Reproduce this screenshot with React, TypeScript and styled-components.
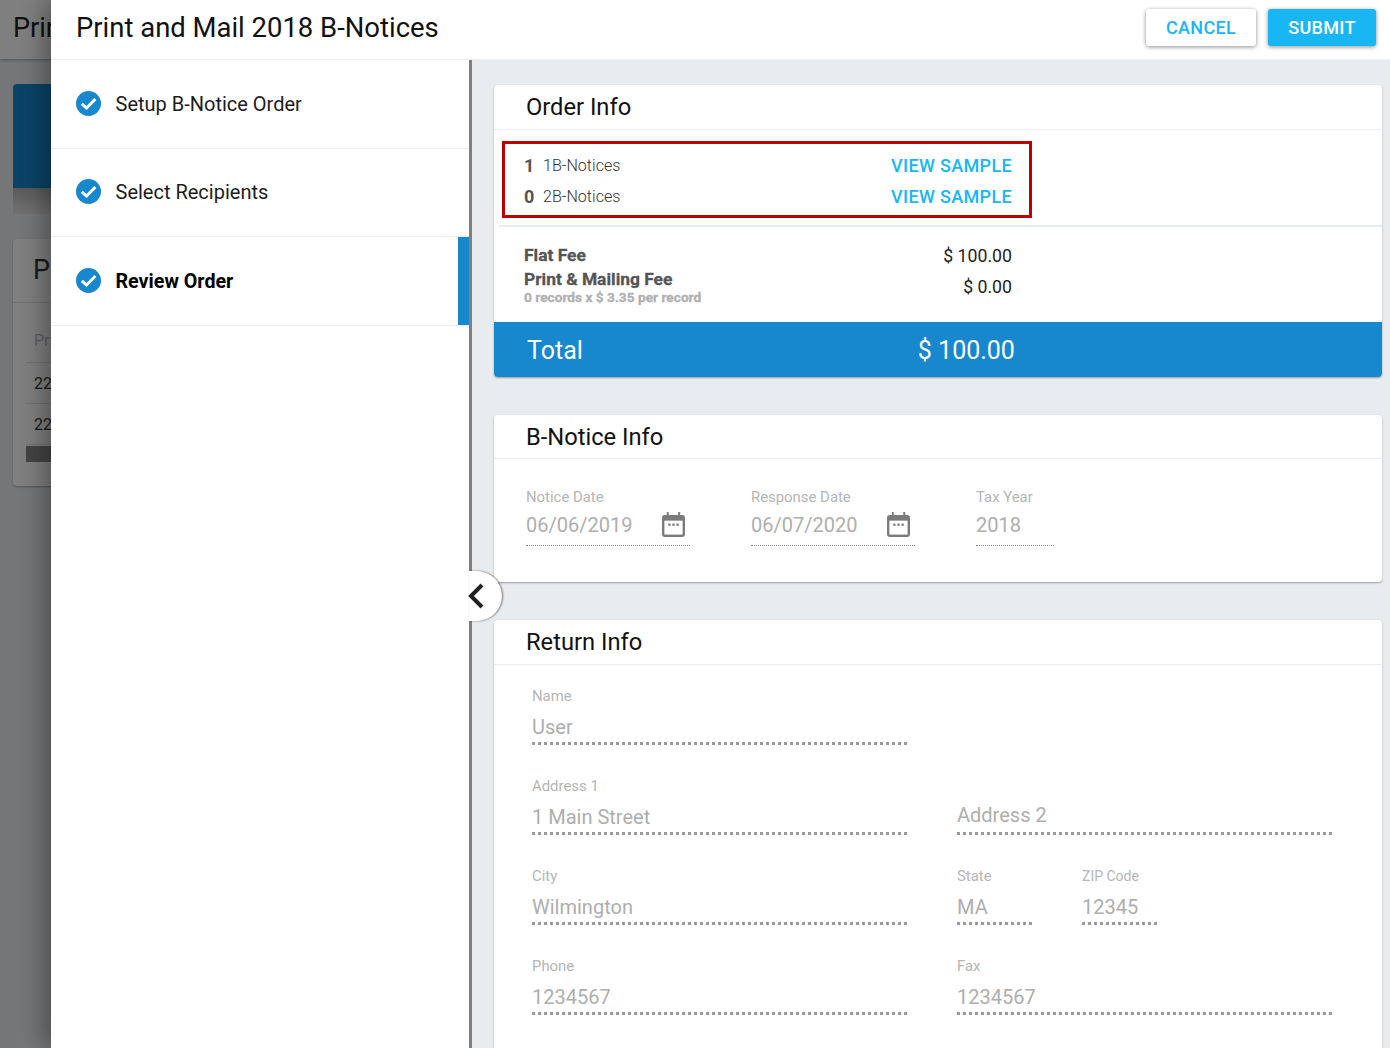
import * as React from 'react';
import styled, { createGlobalStyle } from 'styled-components';

const App = () => (
  <>
    <GlobalStyle />
    <Screen>
      <BackPage>
        <BackHeader>Print</BackHeader>
        <BackBody>
          <BackBanner />
          <BackBannerFoot />
          <BackCard>
            <BackCardTitle>Print</BackCardTitle>
            <BackRow $muted>Print</BackRow>
            <BackRow>22</BackRow>
            <BackRow>22</BackRow>
            <BackBar />
          </BackCard>
        </BackBody>
      </BackPage>
      <Scrim />
      <Drawer>
        <DrawerHeader>
          <DrawerTitle>Print and Mail 2018 B-Notices</DrawerTitle>
          <HeaderActions>
            <CancelButton>CANCEL</CancelButton>
            <SubmitButton>SUBMIT</SubmitButton>
          </HeaderActions>
        </DrawerHeader>
        <DrawerBody>
          <Sidebar>
            <Step $height={89}>
              <CheckIcon />
              <StepLabel>Setup B-Notice Order</StepLabel>
            </Step>
            <Step $height={88} $lift>
              <CheckIcon />
              <StepLabel>Select Recipients</StepLabel>
            </Step>
            <Step $height={89} $active>
              <CheckIcon />
              <StepLabel $active>Review Order</StepLabel>
            </Step>
            <CollapseButton aria-label="Collapse">
              <ChevronSvg width="20" height="28" viewBox="0 0 20 28">
                <path d="M16 3 L5 14 L16 25" fill="none" stroke="#212121" strokeWidth="4" />
              </ChevronSvg>
            </CollapseButton>
          </Sidebar>
          <Content>
            <OrderCard>
              <CardTitle>Order Info</CardTitle>
              <SampleBox>
                <SampleRow>
                  <Count>1</Count>
                  <SampleName>1B-Notices</SampleName>
                  <SampleLink>VIEW SAMPLE</SampleLink>
                </SampleRow>
                <SampleRow>
                  <Count>0</Count>
                  <SampleName>2B-Notices</SampleName>
                  <SampleLink>VIEW SAMPLE</SampleLink>
                </SampleRow>
              </SampleBox>
              <FeeDivider />
              <Fees>
                <FeeLabels>
                  <FeeLabel>Flat Fee</FeeLabel>
                  <FeeLabel>Print &amp; Mailing Fee</FeeLabel>
                  <FeeNote>0 records x $ 3.35 per record</FeeNote>
                </FeeLabels>
                <FeeValues>
                  <FeeValue>$ 100.00</FeeValue>
                  <FeeValue>$ 0.00</FeeValue>
                </FeeValues>
              </Fees>
              <TotalBar>
                <span>Total</span>
                <TotalAmount>$ 100.00</TotalAmount>
              </TotalBar>
            </OrderCard>

            <NoticeCard>
              <NoticeTitle>B-Notice Info</NoticeTitle>
              <NoticeFields>
                <ThinField $width={164}>
                  <FieldLabel>Notice Date</FieldLabel>
                  <ThinValue>
                    06/06/2019
                    <CalendarIcon />
                  </ThinValue>
                </ThinField>
                <ThinField $width={164}>
                  <FieldLabel>Response Date</FieldLabel>
                  <ThinValue>
                    06/07/2020
                    <CalendarIcon />
                  </ThinValue>
                </ThinField>
                <ThinField $width={78}>
                  <FieldLabel>Tax Year</FieldLabel>
                  <ThinValue>2018</ThinValue>
                </ThinField>
              </NoticeFields>
            </NoticeCard>

            <ReturnCard>
              <CardTitle>Return Info</CardTitle>
              <ReturnGrid>
                <WideField>
                  <FieldLabel>Name</FieldLabel>
                  <DottedValue>User</DottedValue>
                </WideField>
                <WideField />
                <WideField>
                  <FieldLabel>Address 1</FieldLabel>
                  <DottedValue>1 Main Street</DottedValue>
                </WideField>
                <WideField>
                  <DottedValue $placeholder>Address 2</DottedValue>
                </WideField>
                <WideField>
                  <FieldLabel>City</FieldLabel>
                  <DottedValue>Wilmington</DottedValue>
                </WideField>
                <SplitField>
                  <WideField>
                    <FieldLabel>State</FieldLabel>
                    <DottedValue>MA</DottedValue>
                  </WideField>
                  <WideField>
                    <FieldLabel $small>ZIP Code</FieldLabel>
                    <DottedValue>12345</DottedValue>
                  </WideField>
                </SplitField>
                <WideField>
                  <FieldLabel>Phone</FieldLabel>
                  <DottedValue>1234567</DottedValue>
                </WideField>
                <WideField>
                  <FieldLabel>Fax</FieldLabel>
                  <DottedValue>1234567</DottedValue>
                </WideField>
              </ReturnGrid>
            </ReturnCard>
          </Content>
        </DrawerBody>
      </Drawer>
    </Screen>
  </>
);

const CheckIcon = () => (
  <svg width="26" height="26" viewBox="0 0 26 26" style={{ flex: 'none' }}>
    <circle cx="12.5" cy="12.5" r="12.5" fill="#1787ce" />
    <path d="M5.8 12.8 L10.5 17 L19.4 8" fill="none" stroke="#fff" strokeWidth="3" />
  </svg>
);

const CalendarIcon = () => (
  <CalendarSvg width="23" height="25" viewBox="0 0 24 26">
    <path d="M5 0h2v3h10V0h2v3h2a3 3 0 0 1 3 3v17a3 3 0 0 1-3 3H3a3 3 0 0 1-3-3V6a3 3 0 0 1 3-3h2z" fill="#7b7b7b" />
    <rect x="2.5" y="9" width="19" height="14.5" fill="#fff" />
    <rect x="6.5" y="12" width="2.4" height="2.4" fill="#7b7b7b" />
    <rect x="10.8" y="12" width="2.4" height="2.4" fill="#7b7b7b" />
    <rect x="15.1" y="12" width="2.4" height="2.4" fill="#7b7b7b" />
  </CalendarSvg>
);

// STYLED COMPONENTS

const GlobalStyle = createGlobalStyle`
  html, body {
    margin: 0;
    padding: 0;
    height: 100%;
    overflow: hidden;
    background: #e9ecef;
    font-family: Roboto, "Liberation Sans", sans-serif;
  }
  * {
    box-sizing: border-box;
  }
`;

const Screen = styled.div`
  position: relative;
  width: 100%;
  height: 1048px;
  overflow: hidden;
`;

const BackPage = styled.div`
  height: 100%;
  background: #e9ecef;
`;

const BackHeader = styled.div`
  height: 59px;
  padding: 12px 13px 0;
  background: #fff;
  color: #212121;
  font-size: 27px;
  white-space: nowrap;
  overflow: hidden;
  box-shadow: 0 1px 3px rgba(0, 0, 0, 0.3);
`;

const BackBody = styled.div`
  padding: 25px 13px 0;
`;

const BackBanner = styled.div`
  height: 104px;
  background: #1787ce;
  border-radius: 4px 4px 0 0;
`;

const BackBannerFoot = styled.div`
  height: 26px;
  background: linear-gradient(#b4b4b4, #e4e4e4);
`;

const BackCard = styled.div`
  margin-top: 25px;
  height: 247px;
  background: #fff;
  border-radius: 4px;
  box-shadow: 0 1px 2px rgba(0, 0, 0, 0.3);
`;

const BackCardTitle = styled.div`
  height: 64px;
  padding: 15px 20px 0;
  font-size: 27px;
  color: #333;
  border-bottom: 1px solid #e4e4e4;
`;

const BackRow = styled.div<{ $muted?: boolean }>`
  height: ${p => (p.$muted ? 60 : 41)}px;
  margin-left: 13px;
  padding: ${p => (p.$muted ? 28 : 11)}px 8px 0;
  font-size: 16px;
  line-height: 20px;
  color: ${p => (p.$muted ? '#bbb' : '#333')};
  border-bottom: 1px solid #e4e4e4;
`;

const BackBar = styled.div`
  height: 16px;
  margin: 1px 0 0 13px;
  background: #888;
`;

const Scrim = styled.div`
  position: absolute;
  inset: 0;
  background: rgba(0, 0, 0, 0.5);
`;

const Drawer = styled.div`
  position: absolute;
  top: 0;
  right: 0;
  bottom: 0;
  left: 51px;
  display: flex;
  flex-direction: column;
  background: #fff;
  box-shadow: -8px 0 22px rgba(0, 0, 0, 0.32);
`;

const DrawerHeader = styled.header`
  flex: none;
  height: 60px;
  display: flex;
  align-items: flex-start;
  justify-content: space-between;
  padding: 9px 14px 0 25px;
  border-bottom: 1px solid #eceff1;
`;

const DrawerTitle = styled.h1`
  margin: 0;
  font-size: 27.45px;
  line-height: 38px;
  font-weight: 400;
  color: #111;
`;

const HeaderActions = styled.div`
  display: flex;
  gap: 12px;
`;

const CancelButton = styled.button`
  width: 110px;
  height: 37px;
  border: none;
  border-radius: 3px;
  background: #fff;
  color: #18b7f4;
  font: 500 18px Roboto, sans-serif;
  letter-spacing: 0.3px;
  box-shadow: 0 1px 4px rgba(0, 0, 0, 0.45);
`;

const SubmitButton = styled(CancelButton)`
  width: 108px;
  background: #18b7f4;
  color: #fff;
`;

const DrawerBody = styled.div`
  flex: 1;
  min-height: 0;
  display: flex;
`;

const Sidebar = styled.nav`
  position: relative;
  flex: none;
  width: 421px;
  background: #fff;
  border-right: 3px solid #808080;
`;

const Step = styled.div<{ $height: number; $active?: boolean; $lift?: boolean }>`
  height: ${p => p.$height}px;
  display: flex;
  align-items: center;
  gap: 13.5px;
  padding: 0 0 ${p => (p.$lift ? 1 : 0)}px 25px;
  border-bottom: 1px solid #eceff1;
  box-shadow: ${p => (p.$active ? 'inset -11px 0 0 #1787ce' : 'none')};
`;

const StepLabel = styled.span<{ $active?: boolean }>`
  font-size: ${p => (p.$active ? 19.7 : 20)}px;
  font-weight: ${p => (p.$active ? 700 : 400)};
  color: ${p => (p.$active ? '#000' : '#1c1c1c')};
`;

const CollapseButton = styled.button`
  position: absolute;
  top: 511px;
  right: -33px;
  width: 33px;
  height: 50px;
  padding: 0;
  display: flex;
  align-items: center;
  justify-content: flex-start;
  background: #fff;
  border: none;
  border-radius: 0 25px 25px 0;
  box-shadow: 1px 0 2px rgba(0, 0, 0, 0.5);
`;

const ChevronSvg = styled.svg`
  flex: none;
  margin-left: -3px;
`;

const Content = styled.main`
  flex: 1;
  min-width: 0;
  overflow: hidden;
  padding: 25px 8px 0 22px;
  background: #e9ecef;
`;

const Card = styled.section`
  background: #fff;
  border-radius: 4px;
  box-shadow: 0 1px 2px rgba(0, 0, 0, 0.35);
  overflow: hidden;
`;

const OrderCard = styled(Card)`
  height: 292px;
`;

const NoticeCard = styled(Card)`
  margin-top: 38px;
  height: 167px;
`;

const ReturnCard = styled(Card)`
  margin-top: 38px;
  height: 520px;
`;

const CardTitle = styled.h2`
  margin: 0;
  height: 45px;
  padding: 0 32px;
  font-size: 23.7px;
  line-height: 44px;
  font-weight: 400;
  color: #111;
  border-bottom: 1px solid #eceff1;
`;

const NoticeTitle = styled(CardTitle)`
  height: 44px;
`;

const SampleBox = styled.div`
  width: 530px;
  height: 77px;
  margin: 11px 0 0 8px;
  padding: 6px 17px 0 19px;
  border: 3px solid #c00000;
`;

const SampleRow = styled.div`
  height: 31px;
  display: flex;
  align-items: center;
`;

const Count = styled.span`
  width: 19px;
  font-size: 18px;
  font-weight: 700;
  color: #555;
`;

const SampleName = styled.span`
  flex: 1;
  font-size: 16.1px;
  font-weight: 300;
  color: #333;
`;

const SampleLink = styled.a`
  font-size: 18px;
  font-weight: 500;
  letter-spacing: 0.35px;
  color: #18b7f4;
`;

const FeeDivider = styled.div`
  height: 2px;
  margin: 7px 0 0 5px;
  background: #e9ecef;
`;

const Fees = styled.div`
  width: 518px;
  height: 95px;
  display: flex;
  justify-content: space-between;
  padding-left: 30px;
`;

const FeeLabels = styled.div`
  padding-top: 17px;
`;

const FeeLabel = styled.div`
  font-size: 17.4px;
  line-height: 23.5px;
  font-weight: 700;
  color: #555;
  -webkit-text-stroke: 0.3px #555;
`;

const FeeNote = styled.div`
  font-size: 13.7px;
  line-height: 13px;
  font-weight: 700;
  color: #b0b0b0;
  -webkit-text-stroke: 0.3px #b0b0b0;
`;

const FeeValues = styled.div`
  padding-top: 14px;
  text-align: right;
`;

const FeeValue = styled.div`
  font-size: 17.7px;
  line-height: 31px;
  color: #222;
`;

const TotalBar = styled.div`
  width: 100%;
  height: 55px;
  display: flex;
  align-items: center;
  padding: 1px 0 0 33px;
  font-size: 25px;
  color: #fff;
  background: #1787ce;
`;

const TotalAmount = styled.span`
  margin-left: 335px;
`;

const NoticeFields = styled.div`
  display: flex;
  gap: 61px;
  padding: 29px 32px 0;
`;

const ThinField = styled.div<{ $width: number }>`
  width: ${p => p.$width}px;
`;

const FieldLabel = styled.div<{ $small?: boolean }>`
  height: 18px;
  font-size: ${p => (p.$small ? 14 : 14.9)}px;
  line-height: 18px;
  color: #b5b5b5;
`;

const ThinValue = styled.div`
  position: relative;
  height: 40px;
  padding-top: 7px;
  font-size: 20px;
  line-height: 24px;
  color: #aeaeae;
  border-bottom: 1px dotted #888;
`;

const CalendarSvg = styled.svg`
  position: absolute;
  top: 6px;
  right: 5px;
`;

const ReturnGrid = styled.div`
  display: grid;
  grid-template-columns: 375px 375px;
  column-gap: 50px;
  grid-auto-rows: 90px;
  padding: 22px 0 0 38px;
`;

const WideField = styled.div`
  min-width: 0;
`;

const SplitField = styled.div`
  display: grid;
  grid-template-columns: 75px 75px;
  column-gap: 50px;
`;

const DottedValue = styled.div<{ $placeholder?: boolean }>`
  height: 40px;
  margin-top: ${p => (p.$placeholder ? 18 : 0)}px;
  padding-top: ${p => (p.$placeholder ? 8 : 10)}px;
  font-size: 20px;
  line-height: 24px;
  color: #aeaeae;
  border-bottom: 3px dotted #9a9a9a;
`;

export default App;
